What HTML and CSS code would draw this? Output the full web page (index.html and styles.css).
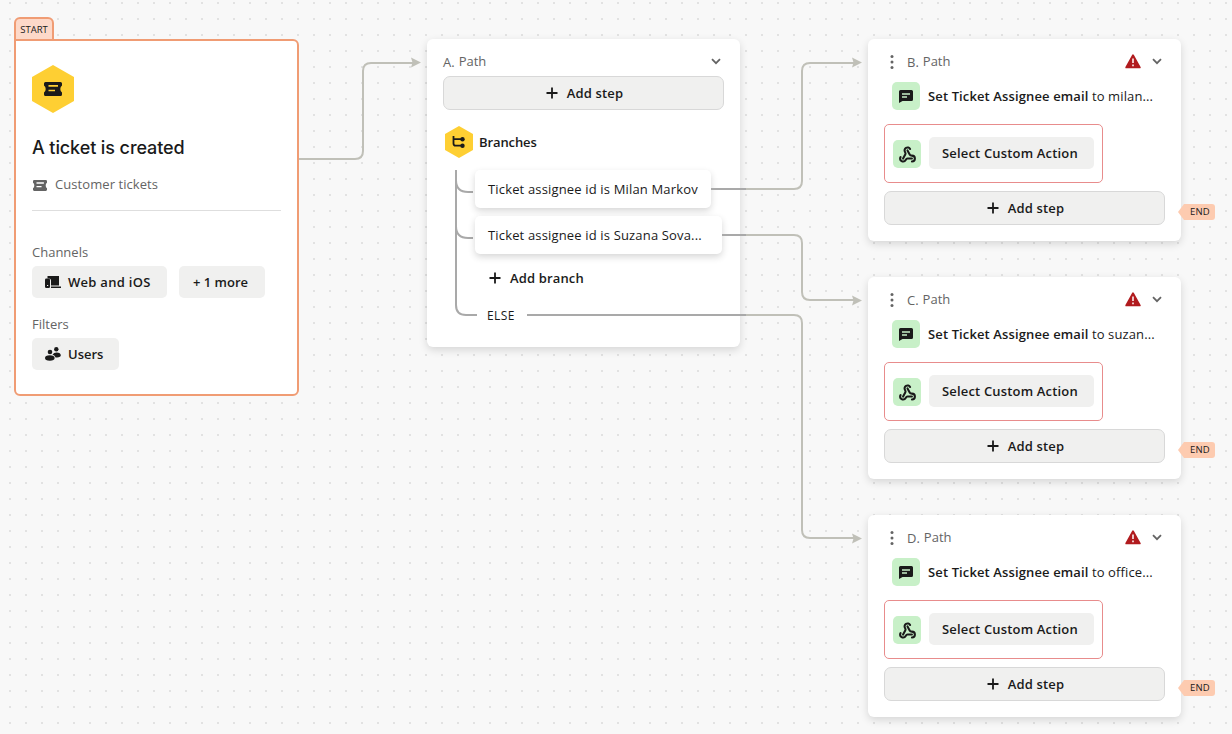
FILE: index.html
```html
<!DOCTYPE html>
<html lang="en">
<head>
    <meta charset="UTF-8">
    <meta name="viewport" content="width=device-width, initial-scale=1.0">
    <title>Workflow builder</title>
    <link rel="stylesheet" href="styles.css">
</head>
<body>
    <!-- Shared icons -->
    <svg class="sprite" width="0" height="0">
        <symbol id="i-plus" viewBox="0 0 12 12"><path d="M6 .5v11M.5 6h11" fill="none" stroke="currentColor" stroke-width="1.8"/></symbol>
        <symbol id="i-chevron" viewBox="0 0 10 7"><path d="M1 1.200l4 4 4-4" fill="none" stroke="currentColor" stroke-width="1.800"/></symbol>
        <symbol id="i-ticket" viewBox="0 0 18 14">
            <path d="M1.500 0h15Q18 0 18 1.500V3.500Q16.300 4.500 16.300 7T18 10.500v2q0 1.500-1.500 1.500h-15Q0 14 0 12.500v-2Q1.700 9.500 1.700 7T0 3.500v-2Q0 0 1.500 0z" fill="currentColor"/>
            <path class="cut" d="M4.500 3.800h9.500M4.500 8.500h6.500" fill="none" stroke-width="1.700"/>
        </symbol>
        <symbol id="i-dots" viewBox="0 0 4 14"><g fill="currentColor"><circle cx="2" cy="1.600" r="1.500"/><circle cx="2" cy="7" r="1.500"/><circle cx="2" cy="12.400" r="1.500"/></g></symbol>
        <symbol id="i-alert" viewBox="0 0 16 15">
            <path d="M8 1.200L14.800 13.400H1.200z" fill="#b11b1e" stroke="#b11b1e" stroke-width="1.800" stroke-linejoin="round"/>
            <path d="M8 4.500v4.500M8 10.500v1.700" stroke="#fff" stroke-width="1.500"/>
        </symbol>
        <symbol id="i-message" viewBox="0 0 14 13">
            <path d="M1.500 0h11Q14 0 14 1.500v8q0 1.500-1.500 1.500H3.500L0 13V1.500Q0 0 1.500 0z" fill="currentColor"/>
            <path d="M3 4h8M3 7h5" stroke="#c8f0c8" stroke-width="1.300"/>
        </symbol>
        <symbol id="i-webhook" viewBox="0.5 0.5 23 22">
            <g fill="none" stroke="currentColor" stroke-width="2.800" stroke-linecap="round" stroke-linejoin="round">
                <path d="M18 16.980h-5.990c-1.100 0-1.950.940-2.480 1.900A4 4 0 0 1 2 17c.010-.700.200-1.400.570-2"/>
                <path d="M6 17l3.130-5.780c.530-.970.100-2.180-.500-3.100a4 4 0 1 1 6.890-4.060"/>
                <path d="M12 6l3.130 5.730C15.660 12.700 16.900 13 18 13a4 4 0 0 1 0 8"/>
            </g>
        </symbol>
    </svg>

    <main class="canvas">
        <section class="node start">
            <span class="start-tab">START</span>
            <div class="hexagon hexagon-lg"><svg width="18" height="14"><use href="#i-ticket"/></svg></div>
            <h1 class="start-title">A ticket is created</h1>
            <div class="start-type"><svg width="14" height="11"><use href="#i-ticket"/></svg>Customer tickets</div>
            <hr>
            <div class="label">Channels</div>
            <div class="chips">
                <button class="chip chip-channel">
                    <svg width="16" height="13" viewBox="0 0 16 13"><path d="M2.500 0H14v9.500H6V4.500Q6 2.500 4 2.500H2.500zM6 10.500h10V12H6z" fill="currentColor"/><rect y="2.500" width="5" height="9.500" rx="1.300" fill="currentColor"/><path d="M2 9.500h1.200" stroke="#f0f0ef"/></svg>
                    Web and iOS
                </button>
                <button class="chip chip-more">+ 1 more</button>
            </div>
            <div class="label label-filters">Filters</div>
            <div class="chips">
                <button class="chip chip-users">
                    <svg width="16" height="14" viewBox="0 0 16 14" fill="currentColor"><circle cx="5" cy="5" r="2.300"/><circle cx="11.300" cy="2.300" r="2.200"/><ellipse cx="4.800" cy="11" rx="4.800" ry="2.700"/><path d="M7.500 7.400Q9 5.500 11.500 5.500q4.300.300 4.300 2.700 0 2-3.800 2.300h-1.400Q10 8.500 7.500 7.400z"/></svg>
                    Users
                </button>
            </div>
        </section>

        <section class="node path path-a">
            <header class="path-head">
                <span class="path-key">A.</span><span class="path-name">Path</span>
                <svg class="chevron" width="10" height="7"><use href="#i-chevron"/></svg>
            </header>
            <button class="add-step"><svg width="12" height="12"><use href="#i-plus"/></svg>Add step</button>
            <div class="branches-title">
                <div class="hexagon"><svg width="14" height="14" viewBox="0 0 14 14"><path d="M1.500 1v7.500q0 2.200 2.200 2.200H10M1.500 4.200H10" fill="none" stroke="currentColor" stroke-width="1.800"/><circle cx="10.500" cy="4.200" r="2.200" fill="currentColor"/><circle cx="10.500" cy="10.700" r="2.200" fill="currentColor"/></svg></div>
                Branches
            </div>
            <div class="branches">
                <svg class="tree" width="24" height="148" viewBox="0 0 24 148"><path d="M1 0v135q0 10 10 10h11M1 10q0 12 12 12h5M1 56q0 12 12 12h5" fill="none" stroke="#a9a9a9" stroke-width="2"/></svg>
                <div class="branch-list">
                    <div class="branch">Ticket assignee id is Milan Markov</div>
                    <div class="branch branch-wide">Ticket assignee id is Suzana Sova...</div>
                    <button class="add-branch"><svg width="12" height="12"><use href="#i-plus"/></svg>Add branch</button>
                    <div class="else">ELSE</div>
                </div>
            </div>
        </section>

        <section class="node path path-b">
            <header class="path-head">
                <svg class="drag" width="4" height="14"><use href="#i-dots"/></svg>
                <span class="path-key">B.</span><span class="path-name">Path</span>
                <svg class="alert" width="16" height="15"><use href="#i-alert"/></svg>
                <svg class="chevron" width="10" height="7"><use href="#i-chevron"/></svg>
            </header>
            <div class="step">
                <span class="step-icon"><svg width="14" height="13"><use href="#i-message"/></svg></span>
                <p><b>Set Ticket Assignee email</b> to milan...</p>
            </div>
            <div class="step-error">
                <span class="step-icon"><svg width="17" height="17"><use href="#i-webhook"/></svg></span>
                <button class="chip chip-action">Select Custom Action</button>
            </div>
            <button class="add-step"><svg width="12" height="12"><use href="#i-plus"/></svg>Add step</button>
            <span class="end">END</span>
        </section>

        <section class="node path path-c">
            <header class="path-head">
                <svg class="drag" width="4" height="14"><use href="#i-dots"/></svg>
                <span class="path-key">C.</span><span class="path-name">Path</span>
                <svg class="alert" width="16" height="15"><use href="#i-alert"/></svg>
                <svg class="chevron" width="10" height="7"><use href="#i-chevron"/></svg>
            </header>
            <div class="step">
                <span class="step-icon"><svg width="14" height="13"><use href="#i-message"/></svg></span>
                <p><b>Set Ticket Assignee email</b> to suzan...</p>
            </div>
            <div class="step-error">
                <span class="step-icon"><svg width="17" height="17"><use href="#i-webhook"/></svg></span>
                <button class="chip chip-action">Select Custom Action</button>
            </div>
            <button class="add-step"><svg width="12" height="12"><use href="#i-plus"/></svg>Add step</button>
            <span class="end">END</span>
        </section>

        <section class="node path path-d">
            <header class="path-head">
                <svg class="drag" width="4" height="14"><use href="#i-dots"/></svg>
                <span class="path-key">D.</span><span class="path-name">Path</span>
                <svg class="alert" width="16" height="15"><use href="#i-alert"/></svg>
                <svg class="chevron" width="10" height="7"><use href="#i-chevron"/></svg>
            </header>
            <div class="step">
                <span class="step-icon"><svg width="14" height="13"><use href="#i-message"/></svg></span>
                <p><b>Set Ticket Assignee email</b> to office...</p>
            </div>
            <div class="step-error">
                <span class="step-icon"><svg width="17" height="17"><use href="#i-webhook"/></svg></span>
                <button class="chip chip-action">Select Custom Action</button>
            </div>
            <button class="add-step"><svg width="12" height="12"><use href="#i-plus"/></svg>Add step</button>
            <span class="end">END</span>
        </section>

        <!-- Connectors between nodes -->
        <svg class="edges" width="1232" height="734" viewBox="0 0 1232 734">
            <g fill="none" stroke="#c0c0b8" stroke-width="2">
                <path d="M299 159h56q8 0 8-8V71q0-8 8-8h43"/>
                <path d="M745 189h49q8 0 8-8V71q0-8 8-8h45"/>
                <path d="M745 235h49q8 0 8 8v49q0 8 8 8h45"/>
                <path d="M745 315h49q8 0 8 8v207q0 8 8 8h45"/>
            </g>
            <path d="M711 189h35M722 235h24M527 315h219" stroke="#a9a9a9" stroke-width="2"/>
            <g fill="#c0c0b8">
                <path d="M411 57.500l10 5-10 5 1.500-5z"/>
                <path d="M852 57.500l10 5-10 5 1.500-5z"/>
                <path d="M852 295.500l10 5-10 5 1.500-5z"/>
                <path d="M852 533.500l10 5-10 5 1.500-5z"/>
            </g>
        </svg>
    </main>
</body>
</html>
```

FILE: styles.css
```css
* {
    margin: 0;
    padding: 0;
    box-sizing: border-box;
}

body {
    font-family: "Open Sans", "Noto Sans", sans-serif;
    font-size: 13px;
    line-height: 20px;
    color: #1a1a1a;
    overflow: hidden;
}

svg {
    display: block;
    flex: none;
}

.sprite {
    position: absolute;
}

button {
    font: inherit;
    font-weight: 600;
    letter-spacing: 0.15px;
    color: inherit;
    border: none;
    background: none;
    white-space: nowrap;
    cursor: pointer;
}

.canvas {
    position: relative;
    height: 734px;
    background-color: #f8f8f8;
    background-image: conic-gradient(from 270deg at 2px 2px, #e2e2e2 90deg, transparent 90deg);
    background-size: 16px 16px;
    background-position: 9px 2px;
}

.node {
    position: absolute;
    background: #fff;
    border-radius: 6px;
}

.edges {
    position: absolute;
    top: 0;
    left: 0;
    pointer-events: none;
}

/* Start node */
.start {
    left: 14px;
    top: 39px;
    width: 285px;
    height: 357px;
    padding: 24px 16px 0;
    border: 2px solid #f09c74;
    border-top-left-radius: 0;
}

.start-tab {
    position: absolute;
    left: -2px;
    top: -24px;
    width: 40px;
    height: 24px;
    border: 2px solid #f09c74;
    border-radius: 6px 6px 0 0;
    background: #fdd9c9;
    font-size: 9.5px;
    font-weight: 500;
    line-height: 21px;
    text-align: center;
}

.hexagon {
    --cut: #fecf33;
    display: flex;
    align-items: center;
    justify-content: center;
    width: 28px;
    height: 32px;
    background: #fecf33;
    clip-path: polygon(50% 0, 100% 25%, 100% 75%, 50% 100%, 0 75%, 0 25%);
}

.hexagon-lg {
    width: 42px;
    height: 48px;
}

.cut {
    stroke: var(--cut, #fff);
}

.start-title {
    margin-top: 22px;
    font-family: Inter, sans-serif;
    font-size: 18px;
    font-weight: 550;
    line-height: 26px;
    letter-spacing: -0.1px;
}

.start-type {
    display: flex;
    align-items: center;
    gap: 8px;
    height: 24px;
    margin-top: 11px;
    padding-left: 1px;
    letter-spacing: 0.07px;
    color: #646464;
}

.start-type svg {
    margin-top: 3px;
}

.start hr {
    margin-top: 14px;
    border: none;
    border-top: 1px solid #dedede;
}

.label {
    margin-top: 31px;
    color: #646464;
}

.label-filters {
    margin-top: 16px;
}

.chips {
    display: flex;
    gap: 12px;
    margin-top: 4px;
}

.chip {
    display: flex;
    align-items: center;
    gap: 7px;
    height: 32px;
    padding: 0 13px;
    border-radius: 5px;
    background: #f0f0ef;
}

.chip-channel {
    width: 135px;
    letter-spacing: 0.28px;
}

.chip-more {
    width: 86px;
    padding-left: 14px;
    letter-spacing: 0;
}

.chip-users {
    width: 87px;
    letter-spacing: 0;
}

/* Path nodes */
.path {
    width: 313px;
    padding: 8px 16px 16px;
    box-shadow: 0 3px 8px rgba(0, 0, 0, 0.14);
}

.path-a {
    left: 427px;
    top: 39px;
    height: 308px;
}

.path-b {
    left: 868px;
    top: 39px;
}

.path-c {
    left: 868px;
    top: 277px;
}

.path-d {
    left: 868px;
    top: 515px;
}

.path-head {
    display: flex;
    align-items: center;
    height: 29px;
    padding-right: 3px;
    color: #646464;
}

.path-key {
    margin-right: 4px;
}

.path-name {
    padding-bottom: 2px;
}

.drag {
    margin: 0 13px 0 6px;
}

.alert {
    margin-left: auto;
}

.chevron {
    margin-left: auto;
}

.alert + .chevron {
    margin-left: 11px;
}

.add-step {
    display: flex;
    align-items: center;
    justify-content: center;
    gap: 9px;
    width: 281px;
    height: 34px;
    padding-left: 2px;
    border: 1px solid #d8d8d8;
    border-radius: 7px;
    background: #f0f0ef;
}

.branches-title {
    display: flex;
    align-items: center;
    gap: 6px;
    margin: 16px 0 12px 2px;
    font-weight: 600;
    letter-spacing: -0.1px;
}

.branches {
    display: flex;
    margin-left: 12px;
}

.branch-list {
    margin-left: -4px;
}

.branch {
    width: 236px;
    height: 38px;
    margin-bottom: 8px;
    padding: 0 13px;
    border-radius: 5px;
    background: #fff;
    box-shadow: 0 3px 7px rgba(0, 0, 0, 0.16);
    line-height: 38px;
    letter-spacing: 0.16px;
    white-space: nowrap;
}

.branch-wide {
    width: 247px;
}

.add-branch {
    display: flex;
    align-items: center;
    gap: 9px;
    height: 32px;
    padding-left: 14px;
}

.else {
    height: 20px;
    margin-top: 12px;
    padding-left: 12px;
    font-size: 12px;
    font-weight: 500;
    letter-spacing: 0.4px;
}

.step {
    display: flex;
    align-items: center;
    gap: 8px;
    margin: 6px 0 14px 8px;
    letter-spacing: 0.12px;
    white-space: nowrap;
}

.step b {
    font-weight: 600;
}

.step-icon {
    display: flex;
    align-items: center;
    justify-content: center;
    width: 28px;
    height: 28px;
    border-radius: 5px;
    background: #c8f0c8;
}

.step-error {
    display: flex;
    gap: 8px;
    width: 219px;
    height: 59px;
    margin-bottom: 8px;
    padding: 12px 8px;
    border: 1px solid #e88c8c;
    border-radius: 5px;
}

.step-error .step-icon {
    margin-top: 3px;
}

.chip-action {
    width: 165px;
    letter-spacing: 0.17px;
}

.end {
    position: absolute;
    left: 310px;
    top: 165px;
    width: 37px;
    height: 16px;
    padding-left: 7px;
    border-radius: 3px;
    background: #fdcbb0;
    clip-path: polygon(0 50%, 6px 0, 100% 0, 100% 100%, 6px 100%);
    font-size: 9.5px;
    font-weight: 500;
    line-height: 16px;
    letter-spacing: 0.2px;
    text-align: center;
}
```
